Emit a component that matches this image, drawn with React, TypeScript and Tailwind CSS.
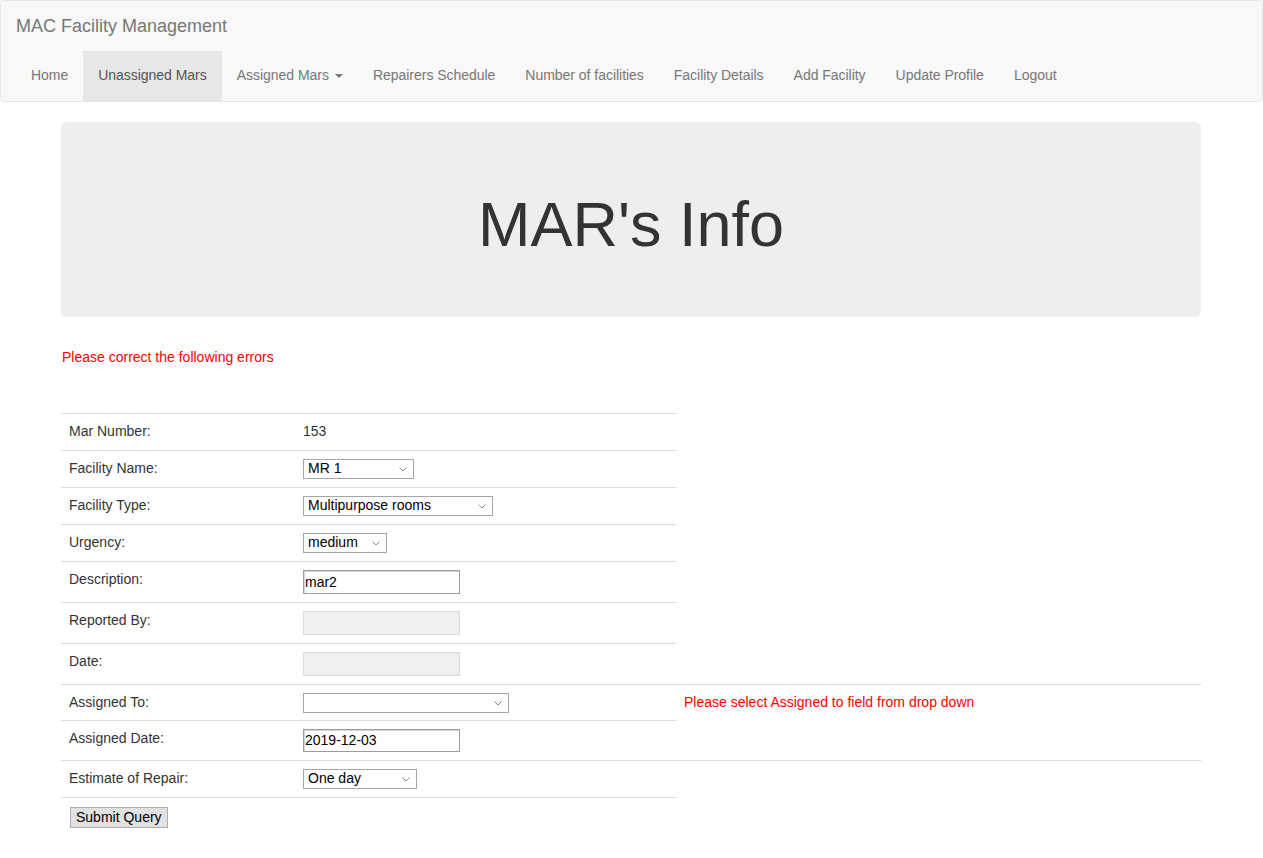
import React from "react";

const Chevron = () => (
  <svg
    width="8"
    height="5"
    viewBox="0 0 8 5"
    className="absolute right-[7px] top-[8px] pointer-events-none"
  >
    <path d="M0.5 0.5 L4 4 L7.5 0.5" fill="none" stroke="#8a8a8a" strokeWidth="1" />
  </svg>
);

function Sel({ w, options }: { w: string; options: string[] }) {
  return (
    <div className={`relative inline-block align-top ${w}`}>
      <select
        defaultValue={options[0]}
        className="appearance-none block w-full h-[20px] border border-[#a6a6a6] bg-white pl-[4px] pr-[16px] pb-[1px] text-[14px] leading-[17px] text-black rounded-none outline-none"
      >
        {options.map((o) => (
          <option key={o} value={o}>
            {o}
          </option>
        ))}
      </select>
      <Chevron />
    </div>
  );
}

function TextInput({ value, disabled, h }: { value?: string; disabled?: boolean; h?: string }) {
  const hh = h ?? "h-[24px]";
  return (
    <input
      defaultValue={value}
      readOnly
      className={
        disabled
          ? `block w-[157px] ${hh} border border-[#dcdcdc] bg-[#efefef] px-[1px] text-[14px] text-black outline-none`
          : `block w-[157px] ${hh} border border-[#9c9c9c] shadow-[inset_1px_1px_0_#d6d6d6] bg-white px-[1px] pb-[1px] text-[14px] text-black outline-none`
      }
    />
  );
}

const tdL = "border-t border-[#dddddd] px-[8px] pt-[7px] pb-[9px] align-top leading-[20px] text-[#333]";
const tdC = "border-t border-[#dddddd] p-[8px] align-top leading-[20px] text-[#333]";

export default function App() {
  const nav = [
    "Home",
    "Unassigned Mars",
    "Assigned Mars",
    "Repairers Schedule",
    "Number of facilities",
    "Facility Details",
    "Add Facility",
    "Update Profile",
    "Logout",
  ];
  return (
    <div className="min-h-[858px] bg-white text-[14px] text-[#333] font-['Liberation_Sans',Arial,sans-serif] leading-[20px]">
      <nav className="border border-[#e7e7e7] bg-[#f8f8f8] rounded-[4px] mb-[20px] px-[15px]">
        <div className="h-[50px] flex items-center text-[18px] text-[#777]">MAC Facility Management</div>
        <ul className="flex">
          {nav.map((n) => (
            <li key={n}>
              <a
                className={
                  n === "Unassigned Mars"
                    ? "flex items-center h-[50px] px-[15px] pt-[14px] pb-[16px] bg-[#e7e7e7] text-[#555] tracking-[-0.03px]"
                    : "flex items-center h-[50px] px-[15px] pt-[14px] pb-[16px] text-[#777] tracking-[-0.03px]"
                }
              >
                {n}
                {n === "Assigned Mars" && (
                  <span className="ml-[6px] mt-[1px] w-0 h-0 border-l-[4px] border-r-[4px] border-t-[4px] border-l-transparent border-r-transparent border-t-[#777]" />
                )}
              </a>
            </li>
          ))}
        </ul>
      </nav>

      <div className="w-[1170px] ml-[46px] px-[15px]">
        <div className="bg-[#eeeeee] rounded-[6px] py-[48px] px-[60px] mb-[30px]">
          <h1 className="mt-[20px] mb-[10px] text-[63px] leading-[1.1] text-center text-[#333]">MAR's Info</h1>
        </div>

        <div className="text-[#ff0000] pl-[1px]">Please correct the following errors</div>

        <table className="mt-[46px] w-[1140px] table-fixed border-collapse">
          <colgroup>
            <col className="w-[234px]" />
            <col className="w-[381px]" />
            <col className="w-[525px]" />
          </colgroup>
          <tbody>
            <tr>
              <td className={tdL}>Mar Number:</td>
              <td className={tdL}>153</td>
            </tr>
            <tr>
              <td className={tdL}>Facility Name:</td>
              <td className={tdC}>
                <Sel w="w-[111px]" options={["MR 1"]} />
              </td>
            </tr>
            <tr>
              <td className={tdL}>Facility Type:</td>
              <td className={tdC}>
                <Sel w="w-[190px]" options={["Multipurpose rooms"]} />
              </td>
            </tr>
            <tr>
              <td className={tdL}>Urgency:</td>
              <td className={tdC}>
                <Sel w="w-[84px]" options={["medium"]} />
              </td>
            </tr>
            <tr>
              <td className={tdL}>Description:</td>
              <td className={tdC}>
                <TextInput value="mar2" />
              </td>
            </tr>
            <tr>
              <td className={tdL}>Reported By:</td>
              <td className={tdC}>
                <TextInput disabled />
              </td>
            </tr>
            <tr>
              <td className={tdL}>Date:</td>
              <td className={tdC}>
                <TextInput disabled />
              </td>
            </tr>
            <tr>
              <td className="border-t border-[#dddddd] px-[8px] pt-[7px] pb-[8px] align-top leading-[20px] text-[#333]">Assigned To:</td>
              <td className="border-t border-[#dddddd] px-[8px] pt-[8px] pb-[7px] align-top leading-[20px]">
                <Sel w="w-[206px]" options={[""]} />
              </td>
              <td className="border-t border-[#dddddd] px-[8px] pt-[7px] pb-[8px] align-top leading-[20px] text-[#ff0000]">
                Please select Assigned to field from drop down
              </td>
            </tr>
            <tr>
              <td className={tdL}>Assigned Date:</td>
              <td className={tdC}>
                <TextInput value="2019-12-03" h="h-[23px]" />
              </td>
            </tr>
            <tr>
              <td className={tdL}>Estimate of Repair:</td>
              <td className={tdC}>
                <Sel w="w-[114px]" options={["One day"]} />
              </td>
              <td className={tdC}></td>
            </tr>
            <tr>
              <td className="border-t border-[#dddddd] pt-[9px] pl-[9px] align-top">
                <button className="block h-[21px] px-[5px] border border-[#adadad] bg-[#e1e1e1] text-[14px] leading-[17px] text-black">
                  Submit Query
                </button>
              </td>
              <td className="border-t border-[#dddddd]"></td>
            </tr>
          </tbody>
        </table>
      </div>
    </div>
  );
}
